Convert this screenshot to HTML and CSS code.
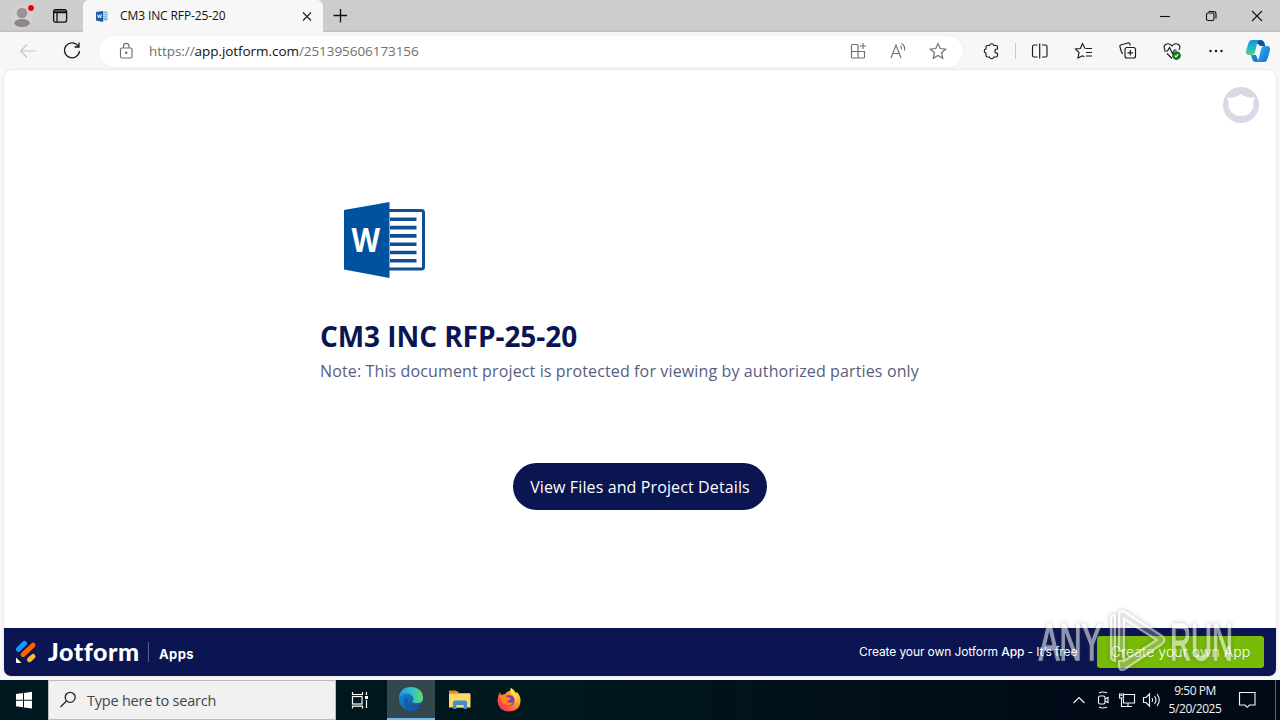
FILE: index.html
```html
<!DOCTYPE html>
<html lang="en">
<head>
<meta charset="utf-8">
<title>CM3 INC RFP-25-20</title>
<link rel="stylesheet" href="styles.css">
</head>
<body>
<div class="desktop">
  <header class="tabstrip">
    <svg class="avatar" width="28" height="32" viewBox="8 0 28 32"><circle cx="22" cy="16" r="11.500" fill="#d3d1cf"/><circle cx="22" cy="13" r="5.300" fill="#9a9593"/><path d="M14 23.500q1-4.500 8-4.500t8 4.500q-2.500 3.500-8 3.500t-8-3.500z" fill="#8c8785"/><circle cx="31" cy="8" r="4" fill="#e6cfcf"/><circle cx="31" cy="8" r="3" fill="#e30613"/></svg>
    <svg class="spaces" width="20" height="20" viewBox="0 0 20 20" fill="none" stroke="#111" stroke-width="1.300"><rect x="3.600" y="3.600" width="13" height="12.500" rx="2"/><path d="M4 5.200h12.500M4 6.600h12.500M7 7v9" /></svg>
    <div class="tab">
      <svg width="14" height="14" viewBox="0 0 14 14"><path d="M6 2.500h6.500v9H6z" fill="#8bb7df"/><path d="M7 4.500h4.500M7 6.500h4.500M7 8.500h4.500" stroke="#c4dcf1"/><path d="M1 3l7-1v11l-7-1.500z" fill="#1d5ca8"/><path d="M2.600 5.500l.9 3.500 1-3.200 1 3.200 1-3.800" fill="none" stroke="#fff" stroke-width=".9"/></svg>
      <span class="tab-title">CM3 INC RFP-25-20</span>
      <svg class="tab-close" width="16" height="16" viewBox="0 0 16 16" stroke="#222" stroke-width="1.200"><path d="M4 4.500l8 8M12 4.500l-8 8"/></svg>
    </div>
    <svg class="newtab" width="20" height="20" viewBox="0 0 20 20" stroke="#111" stroke-width="1.300"><path d="M3.500 9.500h13.500M10.500 3v13.500"/></svg>
    <div class="window-buttons">
      <svg width="46" height="32" viewBox="0 0 46 32"><path d="M18 16.500h10"/></svg>
      <svg width="46" height="32" viewBox="0 0 46 32"><rect x="18.500" y="13" width="7.500" height="7.500" rx="1.500"/><path d="M20.500 11.500h5q2.500 0 2.500 2.500v4.500"/></svg>
      <svg width="46" height="32" viewBox="0 0 46 32"><path d="M18 11l10 10M28 11L18 21"/></svg>
    </div>
  </header>

  <nav class="toolbar">
    <svg class="back" width="24" height="24" viewBox="0 0 24 24"><path d="M20 12H4.500M11 5.500L4.500 12l6.500 6.500"/></svg>
    <svg class="reload" width="24" height="24" viewBox="0 0 24 24"><path d="M18.500 7.500A7.500 7.500 0 1 0 19.500 12M19 3.500v4.500h-4.500"/></svg>
    <div class="address">
      <svg width="24" height="24" viewBox="0 0 24 24"><rect x="6.500" y="9" width="11.500" height="10" rx="1.500"/><path d="M9.500 9V7a2.700 2.700 0 0 1 5.400 0v2"/><circle cx="12.200" cy="13.800" r=".7" fill="#666"/></svg>
      <span class="url">https://<b>app.jotform.com</b>/251395606173156</span>
      <div class="address-actions">
        <svg width="24" height="24" viewBox="0 0 24 24"><path d="M11.500 5.500H6.500a1 1 0 0 0-1 1V18a1 1 0 0 0 1 1H17.500a1 1 0 0 0 1-1v-5.500h-13M12 5.500V19M17 4v6M14 7h6"/></svg>
        <svg width="24" height="24" viewBox="0 0 24 24"><path d="M5 19L10 6l5 13M6.800 14.500h6.500M14.500 7q1.500 1.300 1 3.500M15.500 4.500q4 2.500 3 7"/></svg>
        <svg width="24" height="24" viewBox="0 0 24 24"><path d="M12 4.500l2.200 5 5.500.6-4.200 3.600 1.300 5.600-4.800-2.900-4.800 2.900 1.300-5.600-4.200-3.600 5.500-.6z"/></svg>
      </div>
    </div>
    <svg class="extensions" width="24" height="24" viewBox="0 0 24 24"><path d="M8.500 6.500h2a2.200 2.200 0 0 1 4.300 0h2.200a1.500 1.500 0 0 1 1.500 1.500v2h-.5a2.100 2.100 0 0 0 0 4.200h.5v2.300a1.500 1.500 0 0 1-1.500 1.500h-2.200a2.200 2.200 0 0 1-4.300 0h-2A1.500 1.500 0 0 1 7 16.500v-2.300a2.200 2.200 0 0 1 0-4.300V8A1.500 1.500 0 0 1 8.500 6.500z"/></svg>
    <span class="divider"></span>
    <div class="tools">
      <svg width="24" height="24" viewBox="0 0 24 24"><path d="M9.500 6H6a1.500 1.500 0 0 0-1.500 1.500v9A1.500 1.500 0 0 0 6 18h3.500M14 6h3.500A1.500 1.500 0 0 1 19 7.500v9a1.500 1.500 0 0 1-1.500 1.500H14M11.700 4.500v15"/></svg>
      <svg width="24" height="24" viewBox="0 0 24 24"><path d="M13 9.500L10.500 4.500 8.300 9.500 3.500 10l3.500 3.700L6 19l4.500-2.300M13.500 9.500H20M14 13.500h6M14 17h6M10.500 16.700l1.800 1"/></svg>
      <svg width="24" height="24" viewBox="0 0 24 24"><rect x="9" y="8.500" width="10.500" height="10.500" rx="2"/><path d="M14.300 11v5.500M11.500 13.800H17M7 14.500Q6 14.500 5.500 13L4 8q-.5-1.800 1.200-2.300L12 4q1.500-.3 2 1.200l.5 1.300"/></svg>
      <svg width="24" height="24" viewBox="0 0 24 24"><path d="M5 11Q3 7.500 5.500 5.500 9 3.500 12 7q3-3.500 6.500-1.500Q21 7.500 19 11M4 12h3.500L9.500 8.500l3 6 2-3.500h2M7 14.500l5 5"/><circle cx="16.500" cy="16.500" r="3.800" fill="#15751c" stroke="#15751c"/><path d="M14.700 16.500l1.300 1.300 2.300-2.600" stroke="#fff"/></svg>
      <svg width="24" height="24" viewBox="0 0 24 24"><g fill="#111" stroke="none"><circle cx="6.500" cy="12" r="1.200"/><circle cx="12" cy="12" r="1.200"/><circle cx="17.500" cy="12" r="1.200"/></g></svg>
    </div>
    <svg class="copilot" width="26" height="26" viewBox="0 0 26 26">
      <defs><linearGradient id="cpa" x1="0" y1="0" x2="0" y2="1"><stop stop-color="#1690dc"/><stop offset=".55" stop-color="#27b9c3"/><stop offset="1" stop-color="#5cce83"/></linearGradient><linearGradient id="cpb" x1="0" y1="0" x2="1" y2="1"><stop stop-color="#30bbf0"/><stop offset="1" stop-color="#1467d8"/></linearGradient></defs>
      <path d="M8 2h8q2.500 0 3.300 2.500l1 3.500h-5z" fill="#13529a"/><path d="M7 2h8q-2 0-2.800 3L10 14q-.7 3-3.500 3H4Q0 17 1.300 12L3.500 5Q4.500 2 7 2z" fill="url(#cpa)"/><path d="M6 17l5 0 3 7H10Q8 24 7.200 21z" fill="#1682da"/><path d="M19 8h3q4 0 2.800 5l-2.300 7.500Q21.500 24 19 24h-8q2 0 2.700-3L16 11.500Q16.800 8 19 8z" fill="url(#cpb)"/>
    </svg>
  </nav>

  <main class="page">
    <svg class="podo" width="36" height="36" viewBox="0 0 36 36"><circle cx="18" cy="18" r="18" fill="#d8d9e7"/><path d="M4.500 10Q8 11.500 12 10 15.500 9 18 7q2.500 2 6 3 4 1.500 7.500 0 .300 2.500-1.200 4.500 1 7-3 11-3.500 3.500-9.300 3.500T8.700 25.500q-4-4-3-11Q4.200 12.500 4.500 10z" fill="#fff"/></svg>
    <section class="content">
      <svg class="word" width="100" height="80" viewBox="0 0 100 80">
        <rect x="50" y="10.500" width="37.500" height="58.500" rx="2" fill="#fff" stroke="#104f94" stroke-width="3"/>
        <path d="M54 19.300h26.500M54 27.600h26.500M54 35.900h26.500M54 44.200h26.500M54 52.500h26.500M54 60.800h26.500" stroke="#104f94" stroke-width="3.600"/>
        <path d="M8 10L53.500 2v76L8 69.500z" fill="#00529e"/>
        <text class="word-letter" x="15.500" y="51.500" textLength="28.500" lengthAdjust="spacingAndGlyphs">W</text>
      </svg>
      <h1>CM3 INC RFP-25-20</h1>
      <p>Note: This document project is protected for viewing by authorized parties only</p>
      <button class="view">View Files and Project Details</button>
    </section>
    <footer class="jotbar">
      <svg class="jot-logo" width="22" height="24" viewBox="0 0 22 24" stroke-linecap="round" fill="none"><path d="M3.500 9.300L9.500 3.400" stroke="#1598ff" stroke-width="5"/><path d="M8 14.600L18 5.200" stroke="#ff6100" stroke-width="5"/><path d="M14.500 19.700L18 16.500" stroke="#ffb629" stroke-width="5"/><path d="M1 17.500v4.500q0 1 1 1h4.500z" fill="#fff"/></svg>
      <strong class="jot-name">Jotform</strong>
      <span class="jot-line"></span>
      <span class="jot-apps">Apps</span>
      <span class="jot-text">Create your own Jotform <b>App</b> - It’s free</span>
      <a class="jot-create">Create your own App</a>
    </footer>
  </main>

  <footer class="taskbar">
    <svg class="start" width="48" height="40" viewBox="0 0 48 40" fill="#fff"><path d="M16 14l7-1v6.700h-7zM24 12.900l8-1.100v7.900h-8zM16 20.700h7v6.600l-7-1zM24 20.700h8v7.800l-8-1.100z"/></svg>
    <div class="search">
      <svg width="20" height="20" viewBox="0 0 20 20" fill="none" stroke="#222" stroke-width="1.300"><circle cx="11.200" cy="7.300" r="5"/><path d="M7.500 11L1.500 17"/></svg>
      <span>Type here to search</span>
    </div>
    <svg class="taskview" width="48" height="40" viewBox="0 0 48 40" fill="none" stroke="#fff" stroke-width="1.200"><rect x="16.500" y="16.500" width="9.500" height="7.500"/><path d="M16.500 12v2.500h10V12M16.500 28.500v-2.300h10v2.300M30.500 12v3M30.500 20v8"/><path d="M29 16h3v3h-3z" fill="#fff" stroke="none"/></svg>
    <div class="edge-slot">
      <svg width="26" height="26" viewBox="0 0 26 26"><defs><linearGradient id="ea"><stop stop-color="#219bd8"/><stop offset=".55" stop-color="#31c4cb"/><stop offset="1" stop-color="#67db59"/></linearGradient><linearGradient id="eb" x2="1" y2="1"><stop stop-color="#168edb"/><stop offset="1" stop-color="#124d9f"/></linearGradient></defs><circle cx="13" cy="13" r="12" fill="url(#eb)"/><path d="M1 12Q2 1 13 1q11 .5 12 10 .5 6-6 6-5 0-4.500-2 2-2 .5-4-2-3.500-6-3.500Q3 7.500 1 12z" fill="url(#ea)"/><path d="M10 12q-2.500 8 6 9.500 4 .4 7.300-2.500Q20 24.500 14 25 5 22 6.500 14.500 7.500 11 10 12z" fill="#125ba9"/><path d="M12.500 12q-2 4 2 6.500 5 2.500 11-2l-1.200 3q-4.800 2-9.300.8-5-1.800-2.500-8.300z" fill="#33474e"/></svg>
    </div>
    <svg class="task-icon" width="24" height="24" viewBox="0 0 24 24"><path d="M1 3h8l2 2h11v4H1z" fill="#e7a52b"/><path d="M1 2.500h7l1 2H1z" fill="#ec8615"/><path d="M1 6h21.500v13.500H1z" fill="#ffd86b"/><path d="M5 14.500q0-2 2-2h10q2 0 2 2v6.500h-3.500v-4h-7v4H5z" fill="#438fc5"/><path d="M8.500 17h7v2.500h-7z" fill="#f6d36e"/></svg>
    <svg class="task-icon" width="26" height="26" viewBox="0 0 26 26"><defs><linearGradient id="fx" x1="1" y1="0" x2="0" y2="1"><stop stop-color="#fff34c"/><stop offset=".4" stop-color="#ff9a2b"/><stop offset=".75" stop-color="#ff4548"/><stop offset="1" stop-color="#e51f78"/></linearGradient></defs><path d="M4 5l1 3 4-1q2-3 5-3L15 1q3 1 5 5l1-1q4 4 3.500 10-1 9-11.500 9.500Q2 24 1.500 14 1.500 9 4 5z" fill="url(#fx)"/><circle cx="13" cy="13.500" r="5.500" fill="#7939d1"/><path d="M4 9q5-2 7 1l4 1q-1 3-4 3 2 3 6 1-2 5-7 3-5-2-6-9z" fill="#ff841e"/><path d="M15 1q-2 4 1 6 5 4 3 9 3-2 2-8-2-2-3-3z" fill="#ffe03b"/></svg>
    <div class="tray">
      <svg width="24" height="24" viewBox="0 0 24 24"><path d="M6.500 15l5.500-5.500 5.500 5.500"/></svg>
      <svg width="24" height="24" viewBox="0 0 24 24"><rect x="7.500" y="8" width="6.500" height="8" rx="1.500"/><path d="M14 11l3-1.500v5l-3-1.500M8 5q4-2 8 0M8 19q4 2 8 0"/></svg>
      <svg width="24" height="24" viewBox="0 0 24 24"><path d="M9 6.500h10.500v8.500H8.500v-4M13 15v3.500M9 18.500h8M4.500 6h4v4h-4zM6.500 10v8.500h2.500M5.500 7.500h2"/></svg>
      <svg width="24" height="24" viewBox="0 0 24 24"><path d="M4.500 9.500H7l3.500-3.500v12L7 14.500H4.500zM13 10q1.500 2 0 4M15.500 8q3 4 0 8M18 6q4.500 6 0 12"/></svg>
      <div class="clock"><span>9:50 PM</span><span>5/20/2025</span></div>
      <svg class="notice" width="24" height="24" viewBox="0 0 24 24"><path d="M4.500 4.500h15.500v12.500h-5.500l-2.300 2.300-2.200-2.300H4.500z"/></svg>
      <span class="show-desktop"></span>
    </div>
  </footer>

  <svg class="watermark" width="210" height="80" viewBox="0 0 210 80">
    <g class="mark-letters"><text x="7" y="54.500" textLength="63" lengthAdjust="spacingAndGlyphs">ANY</text><text x="138" y="54.500" textLength="63" lengthAdjust="spacingAndGlyphs">RUN</text></g>
    <path class="mark-shape" d="M79 13q0-3 4-3v46q-4-1-4-4zM87 11q0-7 6-4l37 24q5 4 0 8L93 64q-6 3-6-4v-4h4.500v-10H87zM92 14v42l33-21z"/>
  </svg>
</div>
</body>
</html>
```

FILE: styles.css
```css
* { box-sizing: border-box; }
body { margin: 0; font-family: "Open Sans", "Noto Sans", sans-serif; }
svg { display: block; flex: none; }
.desktop { position: relative; width: 1280px; height: 720px; overflow: hidden; display: flex; flex-direction: column; background: #f7f7f7; }

.tabstrip { height: 32px; flex: none; display: flex; align-items: center; background: linear-gradient(#cdcdcd 94%, #bcbcbc); }
.avatar { margin-left: 8px; }
.spaces { margin-left: 14px; }
.tab { width: 240px; height: 32px; margin-left: 13px; padding: 0 8px 0 12px; display: flex; align-items: center; background: #f7f7f7; border-radius: 6px 6px 0 0; }
.tab-title { margin: -1px 0 0 11px; font-size: 12px; letter-spacing: -.11px; color: #111; white-space: nowrap; }
.tab-close { margin-left: auto; }
.newtab { margin-left: 7px; }
.window-buttons { margin-left: auto; display: flex; fill: none; stroke: #111; stroke-width: 1.1; }

.toolbar { height: 38px; flex: none; display: flex; align-items: center; fill: none; stroke: #1a1a1a; stroke-width: 1.15; }
.back { margin-left: 16px; stroke: #c5c5c5; }
.reload { margin-left: 20px; stroke-width: 1.3; }
.address { width: 864px; height: 31px; margin-left: 15px; padding: 0 13px 0 15px; display: flex; align-items: center; border-radius: 16px; background: #fff; stroke: #707070; box-shadow: 0 0 2px #e6e6e6; }
.url { margin-left: 11px; font-size: 13.5px; letter-spacing: -.06px; color: #707070; white-space: nowrap; }
.url b { font-weight: 400; color: #111; }
.address-actions { margin-left: auto; display: flex; gap: 16px; }
.extensions { margin-left: 16px; }
.divider { width: 1px; height: 16px; margin: 0 12px; background: #c9c9c9; }
.tools { display: flex; gap: 20px; }
.copilot { margin-left: 17px; stroke: none; }

.page { height: 606px; flex: none; margin: 0 4px; display: flex; flex-direction: column; background: #fff; border-radius: 7px; overflow: hidden; box-shadow: 0 0 2px #c8c8c8; }
.podo { margin: 17px 17px 0 auto; }
.content { width: 640px; margin: 77px auto 0; display: flex; flex-direction: column; }
.word { margin-left: 16px; }
.word-letter { font: 700 34px "Open Sans", sans-serif; fill: #fff; }
h1 { margin: 37px 0 0; font-size: 28px; line-height: 38px; letter-spacing: -.06px; color: #0a1551; white-space: nowrap; }
p { margin: 4px 0 0; font-size: 16px; line-height: 24px; letter-spacing: .13px; color: #575d80; white-space: nowrap; }
.view { width: 254px; height: 47px; margin: 80px auto 0; padding: 0; border: 0; border-radius: 24px; background: #0a1551; color: #fff; font: 400 16px "Open Sans", sans-serif; letter-spacing: .12px; white-space: nowrap; }
.jotbar { height: 48px; margin-top: auto; display: flex; align-items: center; background: #0a1551; color: #fff; white-space: nowrap; }
.jot-logo { margin-left: 11px; }
.jot-name { width: 91px; margin: -2px 0 0 11px; font: 900 25px Lato, sans-serif; letter-spacing: .55px; }
.jot-line { width: 1px; height: 20px; margin-left: 9px; background: #5a628b; }
.jot-apps { margin: 3px 0 0 10px; font: 700 13px Inter, sans-serif; letter-spacing: .4px; }
.jot-text { width: 219px; margin: -1px 0 0 auto; font: 400 12px Inter, sans-serif; letter-spacing: -.1px; }
.jot-text b { font-weight: 500; }
.jot-create { width: 167px; height: 32px; margin: 0 12px 0 19px; border-radius: 3px; background: #78bb07; font: 300 14px/32px Inter, sans-serif; letter-spacing: .08px; text-align: center; }

.taskbar { height: 40px; flex: none; margin-top: 4px; display: flex; align-items: center; background: linear-gradient(90deg, #001820, #00171e 45%, #020a18 85%); }
.search { width: 288px; height: 40px; padding-left: 10px; display: flex; align-items: center; background: #f1f1f1; border: 1px solid #bcbcbc; color: #454545; font-size: 14.5px; letter-spacing: -.23px; white-space: nowrap; }
.search span { margin-left: 8px; }
.edge-slot { width: 48px; height: 40px; margin-left: 3px; display: flex; align-items: center; justify-content: center; background: #33474e; border-bottom: 2px solid #76b9ed; }
.task-icon { margin-left: 13px; }
.task-icon + .task-icon { margin-left: 24px; }
.tray { margin-left: auto; display: flex; align-items: center; fill: none; stroke: #f2f2f2; stroke-width: 1.15; }
.clock { width: 68px; margin-left: -2px; display: flex; flex-direction: column; align-items: center; color: #f2f2f2; font-size: 12px; line-height: 18px; letter-spacing: -.45px; white-space: nowrap; }
.notice { margin-left: 6px; }
.show-desktop { width: 1px; height: 40px; margin: 0 4px 0 16px; background: #60666f; }

.watermark { position: absolute; left: 1032px; top: 605px; overflow: visible; filter: drop-shadow(0 0 2px rgba(60, 60, 60, .7)); opacity: .55; pointer-events: none; }
.mark-letters { font: 400 51px "Liberation Sans", sans-serif; fill: #fff; stroke: #fff; stroke-width: 1.5; }
.mark-shape { fill: rgba(255, 255, 255, .4); stroke: #fff; stroke-width: 2.2; fill-rule: evenodd; }
```
